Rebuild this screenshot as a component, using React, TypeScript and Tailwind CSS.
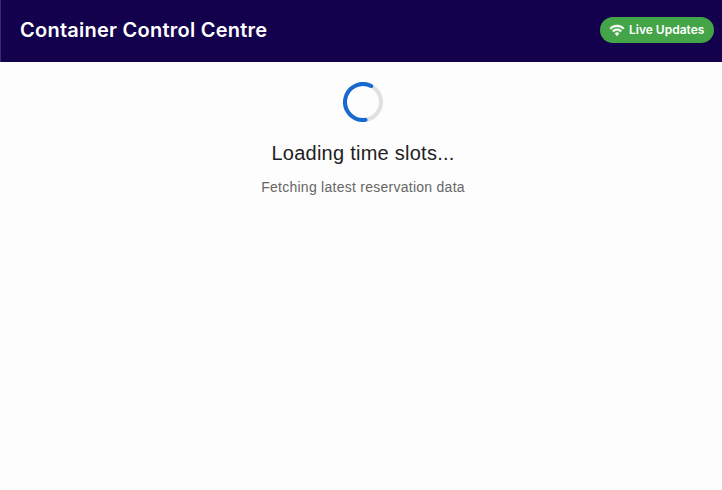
function WifiIcon() {
  return (
    <svg viewBox="0 0 24 24" className="size-4 shrink-0 fill-current stroke-current" strokeWidth="0.7" aria-hidden="true">
      <path d="M1 9l2 2c4.97-4.97 13.03-4.97 18 0l2-2C16.93 2.93 7.08 2.93 1 9zm8 8l3 4 3-4c-1.65-1.66-4.34-1.66-6 0zm-4-4l2 2c2.76-2.76 7.24-2.76 10 0l2-2C15.14 9.14 8.87 9.14 5 13z" />
    </svg>
  );
}

function Spinner() {
  return (
    <svg viewBox="0 0 40 40" className="size-10" fill="none" strokeWidth="4" aria-hidden="true">
      <circle cx="20" cy="20" r="18" stroke="#e0e0e0" />
      <path d="M22.5 37.83A18 18 0 1 1 28.2 3.97" stroke="#1769d0" strokeLinecap="round" />
    </svg>
  );
}

export default function App() {
  return (
    <div className="flex h-screen flex-col overflow-hidden bg-[#fdfdfd] font-['Liberation_Sans',Arial,sans-serif]">
      <header className="flex h-[62px] shrink-0 items-center justify-between border-l border-[#3a2b6d] bg-[#14014d] pr-2 pb-0.5 pl-[19px] font-['Inter',sans-serif] text-white">
        <h1 className="text-[20px] leading-7 font-semibold tracking-[0.25px] whitespace-nowrap">
          Container Control Centre
        </h1>
        <div className="flex h-[26px] w-[114px] items-center gap-1 rounded-full bg-[#43a547] pl-[9px] text-[12px] font-semibold whitespace-nowrap">
          <WifiIcon />
          <span>Live Updates</span>
        </div>
      </header>
      <main className="flex flex-col items-center pt-5 pl-1">
        <Spinner />
        <h2 className="mt-[15px] text-[20px] leading-8 tracking-[0.25px] text-[#212121]">Loading time slots...</h2>
        <p className="mt-2 text-[14px] leading-5 tracking-[0.26px] text-[#666666]">
          Fetching latest reservation data
        </p>
      </main>
    </div>
  );
}
